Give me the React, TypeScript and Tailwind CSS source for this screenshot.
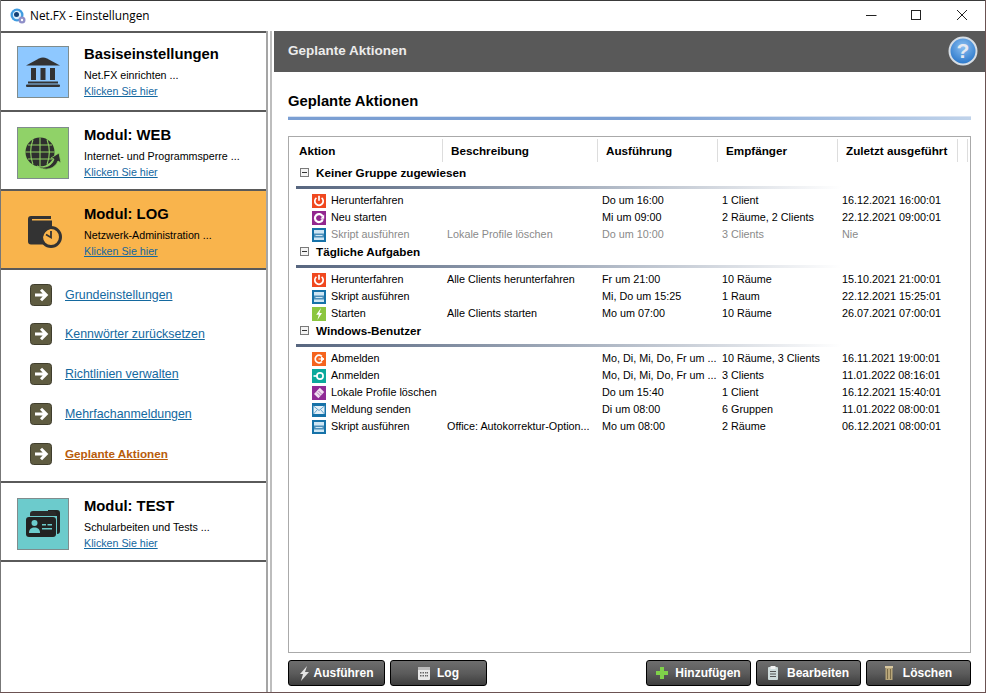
import type { ReactNode } from "react";

function Square({ color, children }: { color: string; children: ReactNode }) {
  return (
    <svg width="14" height="14" viewBox="0 0 14 14" className="shrink-0">
      <rect width="14" height="14" fill={color} />
      {children}
    </svg>
  );
}

function ActionIcon({ type }: { type: string }) {
  if (type === "power")
    return (
      <Square color="#f0481f">
        <path d="M4.400 3.800a4.200 4.200 0 1 0 5.200 0" fill="none" stroke="#fff" strokeWidth="1.700" />
        <path d="M7 1.800v5" stroke="#fff" strokeWidth="1.700" />
      </Square>
    );
  if (type === "restart")
    return (
      <Square color="#92278f">
        <path d="M10.600 5.400a4 4 0 1 0 .2 2.800" fill="none" stroke="#fff" strokeWidth="2.200" />
        <path d="M12.200 3.500v4.200H8.400z" fill="#fff" />
      </Square>
    );
  if (type === "script")
    return (
      <Square color="#1672a8">
        <rect x="2" y="2" width="10" height="10" fill="#cfe6f4" />
        <rect x="2" y="5.500" width="10" height="4" fill="#4c8fba" />
        <rect x="3.500" y="7" width="7" height="1" fill="#cfe6f4" />
      </Square>
    );
  if (type === "start")
    return (
      <Square color="#8cc63f">
        <path d="M9 1 4.200 7.800h2.600L5.400 13l4.600-7H7.400z" fill="#fff" />
      </Square>
    );
  if (type === "logout")
    return (
      <Square color="#f5641e">
        <path d="M9.800 4.400a3.800 3.800 0 1 0 0 5.200" fill="none" stroke="#fff" strokeWidth="1.700" />
        <path d="M6.500 7h4M9.500 5 12 7 9.500 9z" fill="#fff" stroke="#fff" strokeWidth="1" />
      </Square>
    );
  if (type === "login")
    return (
      <Square color="#0ba99c">
        <circle cx="8" cy="7" r="3.100" fill="none" stroke="#fff" strokeWidth="1.700" />
        <path d="M1.500 7h4" stroke="#fff" strokeWidth="1.700" />
      </Square>
    );
  if (type === "profile")
    return (
      <Square color="#8f2a96">
        <path d="M7.800 1.800 12.200 6 6.400 12.200 2 8z" fill="#f0dff0" />
        <path d="M5 6.500 8.500 10M6.500 5 10 8.500" stroke="#a55aa9" strokeWidth="0.800" />
      </Square>
    );
  return (
    <Square color="#1672a8">
      <rect x="1.500" y="3" width="11" height="8" fill="#e3f0f8" />
      <path d="M1.500 3 7 7.500 12.500 3M1.500 11 5.500 6.500M12.500 11 8.500 6.500" fill="none" stroke="#5b9cc4" strokeWidth="0.900" />
    </Square>
  );
}

function Arrow() {
  return (
    <svg width="22" height="22" viewBox="0 0 22 22" className="shrink-0">
      <rect x="0.500" y="0.500" width="21" height="21" rx="3" fill="#5f5c41" stroke="#3f3d2c" />
      <path d="M5 11h11M11 5.800 16.200 11 11 16.200" fill="none" stroke="#fff" strokeWidth="3" />
    </svg>
  );
}

const bank = (
  <svg width="34" height="30" viewBox="0 0 34 30">
    <path d="M13 1.500Q17 -0.500 21 1.500L34 8.500H0z" fill="#333" />
    <path d="M5 11h5v12H5zM14.500 11h5v12h-5zM24 11h5v12h-5z" fill="#333" />
    <rect x="2" y="24.500" width="30" height="2" fill="#333" />
    <rect x="0" y="27.500" width="34" height="2.500" rx="1" fill="#333" />
  </svg>
);

const globe = (
  <svg width="36" height="33" viewBox="0 0 36 33">
    <circle cx="15" cy="15" r="14.500" fill="#2f2f2f" />
    <path
      d="M0.500 15h29M3 8h24M3 22h24M15 0.500v29M8 2.500c-3 8-3 17 0 25M22 2.500c3 8 3 17 0 25"
      fill="none"
      stroke="#8fd163"
      strokeWidth="1.100"
    />
    <path d="M12 29c8 3 15 0 17-7l-3-1 8-5 2 10-3-2c-3 8-13 11-21 5z" fill="#2f2f2f" stroke="#8fd163" strokeWidth="0.800" />
  </svg>
);

const logIcon = (
  <svg width="34" height="32" viewBox="0 0 34 32">
    <path d="M3 0h20v3H4v1.500h20v8a10.500 10.500 0 0 0-7.500 16H3a3 3 0 0 1-3-3V3a3 3 0 0 1 3-3z" fill="#333" />
    <circle cx="23" cy="21" r="9.500" fill="none" stroke="#333" strokeWidth="3" />
    <path d="M23 15v6.500l-5-3" fill="none" stroke="#333" strokeWidth="1.800" />
  </svg>
);

const cards = (
  <svg width="34" height="28" viewBox="0 0 34 28">
    <path d="M22 0h9a3 3 0 0 1 3 3v18a3 3 0 0 1-3 3V6H22z" fill="#222" />
    <path d="M4 4a3 3 0 0 1 3-3h20a3 3 0 0 1 3 3v2H4z" fill="#2a2a2a" />
    <rect x="0" y="7" width="30" height="20" rx="3" fill="#222" />
    <circle cx="8.500" cy="13" r="3" fill="#6ccbcc" />
    <path d="M3 23c0-4 2.500-5.500 5.500-5.500S14 19 14 23z" fill="#6ccbcc" />
    <path d="M16 14h4v1.500h-4zM21.500 14H26v1.500h-4.500zM16 18h10v1.500H16z" fill="#6ccbcc" />
  </svg>
);

function Module({
  title,
  sub,
  icon,
  bg,
  active,
  first,
}: {
  title: string;
  sub: string;
  icon: ReactNode;
  bg?: string;
  active?: boolean;
  first?: boolean;
}) {
  return (
    <div className={`relative h-[77px] ${active ? "bg-[#f9b44c]" : "bg-white"}`}>
      <div className={`absolute inset-x-0 ${first ? "top-0" : "top-[2px]"}`}>
        {active ? (
          <div className="absolute left-[18px] top-[13px] w-[52px] h-[52px] flex items-center justify-center">{icon}</div>
        ) : (
          <div className={`absolute left-[16px] top-[13px] w-[52px] h-[52px] border border-[#7f8c8d] flex items-center justify-center ${bg}`}>
            {icon}
          </div>
        )}
        <div className="absolute left-[83px] top-[12px] text-[14.800px] leading-[18px] font-bold text-black whitespace-nowrap">{title}</div>
        <div className="absolute left-[83px] top-[35px] text-[10.700px] leading-[14px] text-black whitespace-nowrap">{sub}</div>
        <a className="absolute left-[83px] top-[51px] text-[10.700px] leading-[14px] text-[#13679f] underline whitespace-nowrap">Klicken Sie hier</a>
      </div>
    </div>
  );
}

const navLinks = ["Grundeinstellungen", "Kennwörter zurücksetzen", "Richtlinien verwalten", "Mehrfachanmeldungen"];

type Row = { icon: string; name: string; desc?: string; when: string; to: string; last: string; dim?: boolean };

const groups: { name: string; rows: Row[] }[] = [
  {
    name: "Keiner Gruppe zugewiesen",
    rows: [
      { icon: "power", name: "Herunterfahren", when: "Do um 16:00", to: "1 Client", last: "16.12.2021 16:00:01" },
      { icon: "restart", name: "Neu starten", when: "Mi um 09:00", to: "2 Räume, 2 Clients", last: "22.12.2021 09:00:01" },
      { icon: "script", name: "Skript ausführen", desc: "Lokale Profile löschen", when: "Do um 10:00", to: "3 Clients", last: "Nie", dim: true },
    ],
  },
  {
    name: "Tägliche Aufgaben",
    rows: [
      { icon: "power", name: "Herunterfahren", desc: "Alle Clients herunterfahren", when: "Fr um 21:00", to: "10 Räume", last: "15.10.2021 21:00:01" },
      { icon: "script", name: "Skript ausführen", when: "Mi, Do um 15:25", to: "1 Raum", last: "22.12.2021 15:25:01" },
      { icon: "start", name: "Starten", desc: "Alle Clients starten", when: "Mo um 07:00", to: "10 Räume", last: "26.07.2021 07:00:01" },
    ],
  },
  {
    name: "Windows-Benutzer",
    rows: [
      { icon: "logout", name: "Abmelden", when: "Mo, Di, Mi, Do, Fr um ...", to: "10 Räume, 3 Clients", last: "16.11.2021 19:00:01" },
      { icon: "login", name: "Anmelden", when: "Mo, Di, Mi, Do, Fr um ...", to: "3 Clients", last: "11.01.2022 08:16:01" },
      { icon: "profile", name: "Lokale Profile löschen", when: "Do um 15:40", to: "1 Client", last: "16.12.2021 15:40:01" },
      { icon: "mail", name: "Meldung senden", when: "Di um 08:00", to: "6 Gruppen", last: "11.01.2022 08:00:01" },
      { icon: "script", name: "Skript ausführen", desc: "Office: Autokorrektur-Option...", when: "Mo um 08:00", to: "2 Räume", last: "06.12.2021 08:00:01" },
    ],
  },
];

const btnIcons: Record<string, ReactNode> = {
  run: (
    <svg width="9" height="15" viewBox="0 0 9 15">
      <path d="M7 0 0 8h3l-2 7 8-9H5z" fill="#e4e4e4" />
    </svg>
  ),
  log: (
    <svg width="12" height="13" viewBox="0 0 12 13">
      <rect width="12" height="13" rx="1" fill="#e8e8e8" />
      <rect y="0" width="12" height="3" fill="#bbb" />
      <path d="M2 5h1.500v1.500H2zM4.500 5H6v1.500H4.500zM7 5h1.500v1.500H7zM9 5h1v1.500H9zM2 8h1.500v1.500H2zM4.500 8H6v1.500H4.500zM7 8h1.500v1.500H7zM9 8h1v1.500H9z" fill="#666" />
    </svg>
  ),
  add: (
    <svg width="12" height="12" viewBox="0 0 12 12">
      <path d="M4 0h4v4h4v4H8v4H4V8H0V4h4z" fill="#7fd14a" />
    </svg>
  ),
  edit: (
    <svg width="10" height="14" viewBox="0 0 10 14">
      <rect y="1" width="10" height="13" rx="1" fill="#cfdcdc" />
      <rect x="2.500" y="0" width="5" height="3" fill="#f2f2f2" />
      <path d="M2 5h6v1H2zM2 7.500h6v1H2zM2 10h6v1H2z" fill="#555" />
    </svg>
  ),
  del: (
    <svg width="8" height="14" viewBox="0 0 8 14">
      <rect x="0" y="0" width="8" height="2" fill="#d8c8a0" />
      <rect x="0.500" y="2" width="7" height="12" fill="#b9a77a" />
      <path d="M2.500 3v10M5.500 3v10" stroke="#6b5d3c" strokeWidth="0.800" />
    </svg>
  ),
};

function Button({ icon, label, w, gap }: { icon: string; label: string; w: string; gap: string }) {
  return (
    <button
      className={`${w} ${gap} h-[26px] flex items-center justify-center rounded-[3px] border border-black bg-linear-to-b from-[#6e6e6e] via-[#5c5c5c] to-[#3e3e3e] text-[12px] font-bold text-white`}
    >
      {btnIcons[icon]}
      <span>{label}</span>
    </button>
  );
}

export default function App() {
  return (
    <div className="relative w-[986px] h-[693px] overflow-hidden bg-white font-[family-name:Liberation_Sans,Arial,sans-serif]">
      {/* window frame */}
      <div className="absolute inset-x-0 top-0 h-px bg-[#3a3a3a]" />
      <div className="absolute left-0 top-0 bottom-0 w-px bg-[#777]" />
      <div className="absolute right-0 top-0 bottom-0 w-px bg-[#6b5252]" />
      <div className="absolute inset-x-0 bottom-0 h-px bg-[#6b5252]" />

      {/* title bar */}
      <div className="absolute left-[1px] right-[1px] top-px h-[30px] flex items-center">
        <svg width="16" height="16" viewBox="0 0 16 16" className="ml-[9px]">
          <circle cx="7" cy="7" r="6.500" fill="#3f9be0" />
          <circle cx="7" cy="7" r="4.200" fill="#d9effc" />
          <circle cx="6.500" cy="6.500" r="2.500" fill="#123f74" />
          <circle cx="12" cy="12" r="3.500" fill="#8f8fc8" />
          <circle cx="12" cy="12" r="1.200" fill="#fff" />
        </svg>
        <span className="ml-[4px] font-[family-name:Open_Sans,sans-serif] text-[11.800px] text-black">Net.FX - Einstellungen</span>
        <svg width="110" height="12" viewBox="0 0 110 12" className="absolute left-[865px] top-[9px]" fill="none" stroke="#222">
          <path d="M0 5.500h10.500" />
          <rect x="45.500" y="0.500" width="9" height="9" />
          <path d="M91 0l10 10M101 0 91 10" />
        </svg>
      </div>

      {/* sidebar */}
      <div className="absolute left-[1px] top-[31px] bottom-px w-[265px] flex flex-col bg-white">
        <div className="h-[2px] bg-[#5a5a5a]" />
        <Module first title="Basiseinstellungen" sub="Net.FX einrichten ..." bg="bg-[#8ec8ff]" icon={bank} />
        <div className="h-[2px] bg-[#5a5a5a]" />
        <Module title="Modul: WEB" sub="Internet- und Programmsperre ..." bg="bg-[#90d268]" icon={globe} />
        <div className="h-[2px] bg-[#5a5a5a]" />
        <Module title="Modul: LOG" sub="Netzwerk-Administration ..." active icon={logIcon} />
        <div className="h-[2px] bg-[#5a5a5a]" />
        <div className="h-[211px] pl-[29px] pt-[14px] flex flex-col gap-[18px]">
          {navLinks.map((l, i) => (
            <div key={l} className={`flex items-center gap-[13px] h-[22px] ${i === 0 ? "-mb-px" : ""}`}>
              <Arrow />
              <a className="text-[12.400px] text-[#14699f] underline">{l}</a>
            </div>
          ))}
          <div className="flex items-center gap-[13px] h-[22px]">
            <Arrow />
            <a className="text-[11.700px] font-bold text-[#b85c0c] underline">Geplante Aktionen</a>
          </div>
        </div>
        <div className="h-[2px] bg-[#5a5a5a]" />
        <Module title="Modul: TEST" sub="Schularbeiten und Tests ..." bg="bg-[#6ccbcc]" icon={cards} />
        <div className="h-[2px] bg-[#5a5a5a]" />
      </div>

      {/* splitter */}
      <div className="absolute left-[266px] top-[31px] bottom-px w-[2px] bg-[#a5a5a5]" />
      <div className="absolute left-[270px] top-[31px] bottom-px w-[2px] bg-[#bdbdbd]" />

      {/* header */}
      <div className="absolute left-[274px] right-px top-[31px] h-[41px] bg-[#595959] flex items-center pl-[14px]">
        <span className="text-[13.500px] font-bold text-[#ececec]">Geplante Aktionen</span>
        <svg width="30" height="30" viewBox="0 0 30 30" className="absolute left-[674px] top-[5px]">
          <defs>
            <radialGradient id="help" cx="50%" cy="35%" r="70%">
              <stop offset="0%" stopColor="#8cc0f2" />
              <stop offset="100%" stopColor="#1f6fc6" />
            </radialGradient>
          </defs>
          <circle cx="15" cy="15" r="13.500" fill="url(#help)" stroke="#d6dde4" strokeWidth="2" />
          <text x="15" y="22" textAnchor="middle" fontSize="21" fontWeight="700" fill="#e6eaf2" fontFamily="Liberation Sans">
            ?
          </text>
        </svg>
      </div>

      {/* content */}
      <div className="absolute left-[288px] top-[92px] text-[14.800px] leading-[18px] font-bold text-black">Geplante Aktionen</div>
      <div className="absolute left-[288px] top-[116px] w-[683px] h-[4px] bg-linear-to-r from-[#7b9fd3] via-[#7b9fd3] to-[#c0d3ea] border-t border-[#d9e3f2]" />

      <div className="absolute left-[288px] top-[136px] w-[683px] h-[517px] border border-[#aaa] bg-white">
        <div className="grid grid-cols-[154px_155px_120px_120px_120px_10px] h-[21px] mt-[2px] text-[11.700px] font-bold text-black leading-[23px]">
          <div className="pl-[10px] border-r border-[#ddd]">Aktion</div>
          <div className="pl-[8px] border-r border-[#ddd]">Beschreibung</div>
          <div className="pl-[8px] border-r border-[#ddd]">Ausführung</div>
          <div className="pl-[8px] border-r border-[#ddd]">Empfänger</div>
          <div className="pl-[8px] border-r border-[#ddd]">Zuletzt ausgeführt</div>
          <div className="border-r border-[#ddd]" />
        </div>
        <div className="mt-[4px]">
          {groups.map((g) => (
            <div key={g.name}>
              <div className="relative h-[28px]">
                <svg width="9" height="9" viewBox="0 0 9 9" className="absolute left-[11px] top-[4px]">
                  <rect x="0.500" y="0.500" width="8" height="8" fill="#f4f4f4" stroke="#7a7a7a" />
                  <path d="M2 4.500h5" stroke="#333" />
                </svg>
                <span className="absolute left-[27px] top-[2px] text-[11.700px] leading-[14px] font-bold text-black">{g.name}</span>
                <div className="absolute left-[7px] top-[22px] w-[545px] h-[3px] bg-linear-to-r from-[#57667f] via-[#a3adbc] to-white" />
              </div>
              {g.rows.map((r) => (
                <div
                  key={r.name + r.when}
                  className={`grid grid-cols-[158px_155px_120px_120px_auto] h-[17px] items-center text-[10.800px] ${r.dim ? "text-[#8a8a8a]" : "text-black"}`}
                >
                  <div className="pl-[23px] flex items-center gap-[5px] whitespace-nowrap">
                    <ActionIcon type={r.icon} />
                    <span>{r.name}</span>
                  </div>
                  <div className="whitespace-nowrap">{r.desc}</div>
                  <div className="whitespace-nowrap">{r.when}</div>
                  <div className="whitespace-nowrap">{r.to}</div>
                  <div className="whitespace-nowrap">{r.last}</div>
                </div>
              ))}
            </div>
          ))}
        </div>
      </div>

      {/* buttons */}
      <div className="absolute left-[288px] top-[660px] flex gap-[5px]">
        <Button icon="run" label="Ausführen" w="w-[97px]" gap="gap-[5px]" />
        <Button icon="log" label="Log" w="w-[97px]" gap="gap-[7px]" />
      </div>
      <div className="absolute left-[646px] top-[660px] flex gap-[5px]">
        <Button icon="add" label="Hinzufügen" w="w-[105px]" gap="gap-[7px]" />
        <Button icon="edit" label="Bearbeiten" w="w-[105px]" gap="gap-[9px]" />
        <Button icon="del" label="Löschen" w="w-[105px]" gap="gap-[10px]" />
      </div>
    </div>
  );
}
